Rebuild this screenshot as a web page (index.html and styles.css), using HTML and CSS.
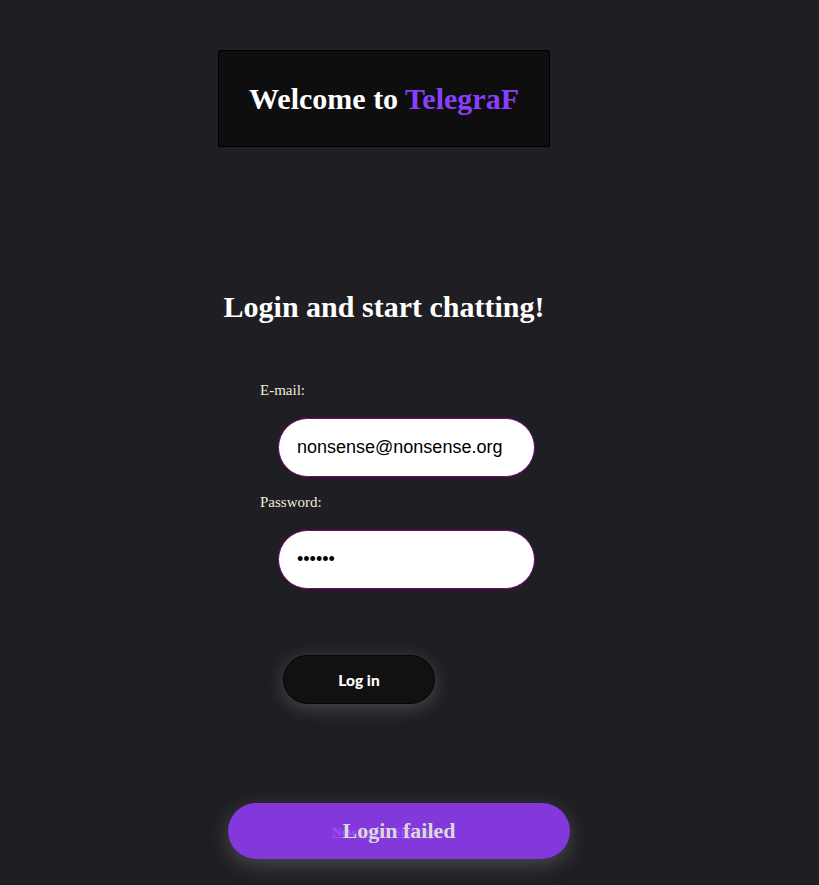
FILE: index.html
```html
<!DOCTYPE html>
<html>
<head>
<meta charset="utf-8">
<link rel="stylesheet" href="styles.css">
</head>
<body>
<div class="page">
  <header class="banner">
    <h1 class="banner-title">Welcome to <span class="brand">TelegraF</span></h1>
  </header>
  <h2 class="subtitle">Login and start chatting!</h2>
  <form class="login-form">
    <label class="field-label">E-mail:</label>
    <input class="field-input" type="text" value="nonsense@nonsense.org">
    <label class="field-label">Password:</label>
    <input class="field-input" type="password" value="secret">
    <button class="login-btn" type="button">Log in</button>
  </form>
  <div class="signup-row"><a class="signup-link" href="#">New user? Sign up</a></div>
</div>
<div class="toast">Login failed</div>
</body>
</html>
```
FILE: styles.css
```css
html, body {
  margin: 0;
  padding: 0;
  background: #1f1e23;
}
body {
  font-family: "Liberation Serif", "Times New Roman", serif;
  color: #fff;
  height: 885px;
  overflow: hidden;
}
.page {
  width: 768px;
  display: flex;
  flex-direction: column;
  align-items: center;
  padding-top: 50px;
}
.banner {
  width: 330px;
  height: 95px;
  background: #0e0e0e;
  border: 1px solid #000;
  display: flex;
  align-items: center;
  justify-content: center;
}
.banner-title {
  margin: 0;
  font-size: 30px;
  font-weight: bold;
  color: #fff;
}
.brand {
  color: #8a3ffc;
}
.subtitle {
  margin: 143px 0 0 0;
  font-size: 30px;
  font-weight: bold;
  color: #fff;
}
.login-form {
  align-self: flex-start;
  margin-left: 260px;
  margin-top: 58px;
  display: flex;
  flex-direction: column;
  align-items: flex-start;
}
.field-label {
  font-size: 15px;
  color: #f3e9dc;
  line-height: 17px;
}
.field-input {
  margin: 19px 0 0 18px;
  width: 257px;
  height: 59px;
  box-sizing: border-box;
  border: 1px solid #800080;
  border-radius: 30px;
  background: #fff;
  padding: 0 18px;
  font-family: "Liberation Sans", Arial, sans-serif;
  font-size: 18px;
  color: #000;
  outline: none;
}
.field-input + .field-label {
  margin-top: 17px;
}
.login-btn {
  margin: 66px 0 0 23px;
  width: 152px;
  height: 49px;
  border-radius: 25px;
  background: #111;
  border: 1px solid #050505;
  color: #fff;
  font-family: Lato, "Open Sans", sans-serif;
  font-weight: 900;
  font-size: 15.5px;
  box-shadow: 0 4px 18px rgba(200, 200, 200, 0.25);
}
.signup-row {
  margin-top: 118px;
}
.signup-link {
  font-size: 13px;
  font-weight: bold;
  color: #e6dcff;
  text-decoration: underline;
}
.toast {
  position: absolute;
  left: 228px;
  top: 803px;
  width: 342px;
  height: 56px;
  border-radius: 28px;
  background: rgba(145, 60, 245, 0.88);
  box-shadow: 0 6px 20px rgba(200, 200, 200, 0.25);
  display: flex;
  align-items: center;
  justify-content: center;
  font-size: 22px;
  font-weight: bold;
  color: #d9d9d9;
}
```
